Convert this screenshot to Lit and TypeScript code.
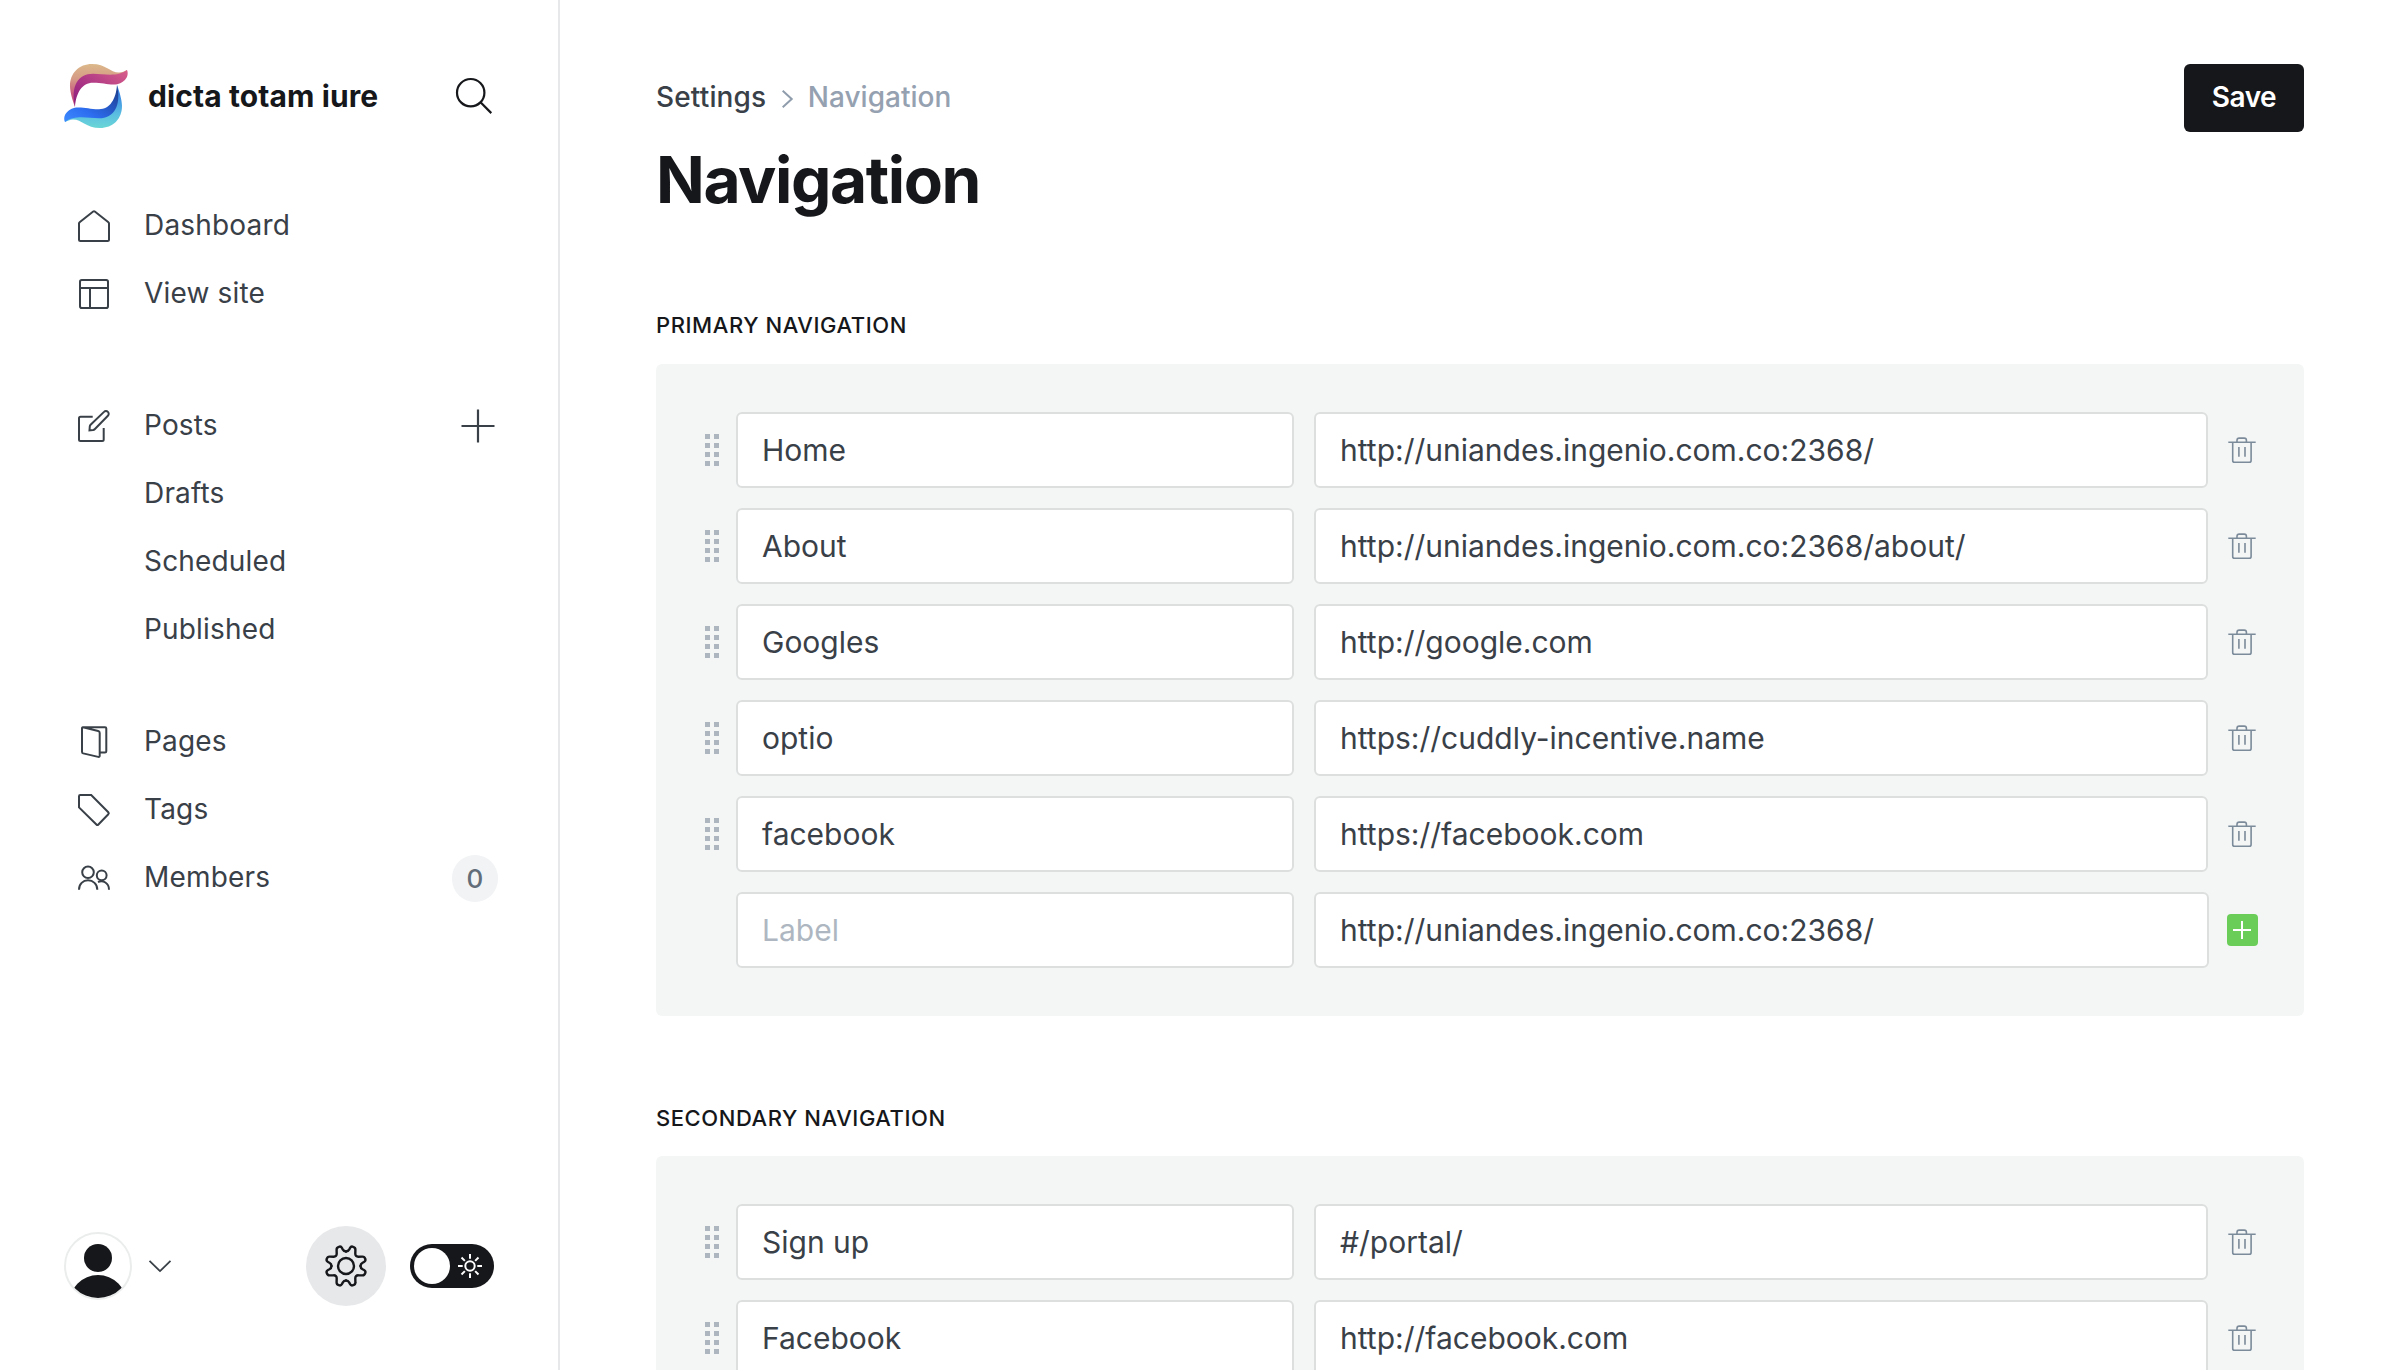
import { LitElement, html, css, svg } from "lit";
import { customElement, property } from "lit/decorators.js";

type NavRow = { label: string; url: string };

const PRIMARY: NavRow[] = [
  { label: "Home", url: "http://uniandes.ingenio.com.co:2368/" },
  { label: "About", url: "http://uniandes.ingenio.com.co:2368/about/" },
  { label: "Googles", url: "http://google.com" },
  { label: "optio", url: "https://cuddly-incentive.name" },
  { label: "facebook", url: "https://facebook.com" },
];

const SECONDARY: NavRow[] = [
  { label: "Sign up", url: "#/portal/" },
  { label: "Facebook", url: "http://facebook.com" },
];

/* Sidebar icons share a 32px grid and a 2px stroke. */
const ICONS: Record<string, unknown> = {
  house: svg`<path d="M1.900 12 15.200 1.500q.8-.6 1.600 0L30.100 12q.9.700.9 1.600V29.500q0 1.500-1.500 1.500H2.500Q1 31 1 29.500V13.600Q1 12.700 1.900 12Z"/>`,
  layout: svg`<rect x="2" y="2" width="28" height="28" rx="1.800"/><path d="M2 10h28M12 10v20"/>`,
  pencil: svg`<path d="M14.700 6.700H2.500Q1 6.700 1 8.200V29.500Q1 31 2.500 31H24.200Q25.700 31 25.700 29.500V18"/><path d="M11.500 20.300l.3-4q.1-.9.800-1.600L26 1.900a2.700 2.700 0 0 1 3.900 3.900L16.700 19.200q-.7.700-1.600.8Z"/>`,
  pages: svg`<path d="M5 1.300 20.200 5q1.500.4 1.500 1.900V29.700q0 1.600-1.500 1.200L5.200 27.400Q4 27 4 25.700V2.300Q4 1 5 1.300ZM5 1.300H27Q28.300 1.300 28.300 2.600V25.200Q28.300 26.500 27 26.500H22"/>`,
  tag: svg`<path d="M2.300 1H13.200L30.300 18.200q1 1 0 2L20.400 30.500q-1 1-2 0L1 13.400V2.300Q1 1 2.300 1Z"/>`,
  members: svg`<circle cx="10" cy="10.300" r="5.800"/><circle cx="23.700" cy="13.300" r="4.900"/><path d="M1 27.700C1 22 5 18.300 10 18.300S19.300 22 19.300 27.700M20 20C25 17.800 31 21 31 27.700"/>`,
};

@customElement("side-item")
export class SideItem extends LitElement {
  @property() label = "";
  @property() icon = "";
  @property() trailing = "";

  static styles = css`
    :host { display: flex; align-items: center; height: 68px; color: #394047; }
    svg { width: 32px; height: 32px; overflow: visible; fill: none; stroke: currentColor; stroke-width: 2; }
    .slot { display: flex; width: 66px; flex: none; }
    .text { flex: 1; font-size: 28px; line-height: 32px; padding-bottom: 2px; letter-spacing: 0.17px; }
    .plus { margin-right: 3px; width: 34px; height: 34px; stroke-width: 2.200; }
    .badge { box-sizing: border-box; width: 46px; height: 47px; border-radius: 24px; background: #f1f3f4; color: #626d79;
      font-size: 26px; font-weight: 500; line-height: 47px; text-align: center; }
  `;

  render() {
    return html`
      <span class="slot">${this.icon ? html`<svg viewBox="0 0 32 32">${ICONS[this.icon]}</svg>` : ""}</span>
      <span class="text">${this.label}</span>
      ${this.trailing === "plus"
        ? html`<svg class="plus" viewBox="0 0 34 34"><path d="M.5 17h33M17 .5v33"/></svg>`
        : this.trailing
          ? html`<span class="badge">${this.trailing}</span>`
          : ""}
    `;
  }
}

@customElement("nav-panel")
export class NavPanel extends LitElement {
  @property({ attribute: false }) rows: NavRow[] = [];
  @property() draft = "";

  static styles = css`
    :host { display: flex; flex-direction: column; gap: 20px; box-sizing: border-box; padding: 48px 46px 48px 48px;
      background: #f4f6f6; border-radius: 6px; }
    .row { display: grid; grid-template-columns: 32px 558px 914px 1fr; align-items: center; height: 76px; }
    .row.new { grid-template-columns: 32px 558px 915px 1fr; }
    .field { box-sizing: border-box; height: 76px; border: 2px solid #dddfdf; border-radius: 6px; background: #fff;
      padding: 0 24px; font-size: 30px; line-height: 72px; color: #394047; white-space: nowrap; overflow: hidden; }
    .url { margin-left: 20px; }
    .placeholder { color: #aeb7c1; }
    .grip { width: 14px; height: 32px; margin-left: 1px; fill: #adb5bf; }
    .trash { width: 28px; height: 28px; margin-left: 20px; overflow: visible; fill: none; stroke: #7c8b9a; stroke-width: 1.600; }
    .add { display: flex; width: 31px; height: 32px; margin-left: 18px; border-radius: 4px; background: #69cd58; }
    .add svg { width: 31px; height: 32px; stroke: #fff; stroke-width: 2; }
  `;

  render() {
    return html`
      ${this.rows.map(
        (r) => html`<div class="row">
          <svg class="grip" viewBox="0 0 14 32">
            ${[0, 9, 18, 27].map((y) => svg`<rect x="0" y=${y} width="5" height="5"/><rect x="9" y=${y} width="5" height="5"/>`)}
          </svg>
          <div class="field">${r.label}</div>
          <div class="field url">${r.url}</div>
          <svg class="trash" viewBox="0 0 28 28">
            <path d="M.3 6.300H27.700M4.700 6.300V24.500Q4.700 26.300 6.500 26.300H21.300Q23.100 26.300 23.100 24.500V6.300M9 6.300V4.300Q9 2.100 11.200 2.100H16.200Q18.400 2.100 18.400 4.300V6.300M10.900 11V20.700M17 11V20.700"/>
          </svg>
        </div>`
      )}
      ${this.draft
        ? html`<div class="row new">
            <span></span>
            <div class="field placeholder">Label</div>
            <div class="field url">${this.draft}</div>
            <span class="add"><svg viewBox="0 0 31 32"><path d="M6 16H24M15 7V25"/></svg></span>
          </div>`
        : ""}
    `;
  }
}

/* One quarter of the gear outline, repeated at 90 degree steps. */
const GEAR_QUARTER =
  "M0-14.500C-1.600-14.500-2.600-15.300-3.300-16.600L-4-18C-4.700-19.400-5.900-19.700-7.200-19.200C-8.900-18.700-9.500-17.600-9.400-16.200L-9.300-12.400C-9.200-10.400-10.400-9.200-12.400-9.300L-16.200-9.400C-17.600-9.500-18.700-8.900-19.200-7.200C-19.700-5.900-19.400-4.700-18-4L-16.600-3.300C-15.300-2.600-14.500-1.600-14.500 0";

@customElement("app-root")
export class AppRoot extends LitElement {
  static styles = css`
    :host { display: flex; width: 2400px; height: 1370px; overflow: hidden; background: #fff; color: #15171a;
      font-family: Inter, "Liberation Sans", sans-serif; }
    svg { overflow: visible; fill: none; flex: none; }
    .side { box-sizing: border-box; width: 560px; flex: none; display: flex; flex-direction: column;
      border-right: 2px solid #e6e8ea; padding: 64px 60px 64px 64px; }
    .brand { display: flex; align-items: center; height: 64px; }
    .logo { width: 64px; height: 64px; }
    .name { flex: 1; margin-left: 20px; font-size: 30px; font-weight: 700; line-height: 36px; padding-bottom: 1px;
      letter-spacing: 0.1px; }
    .search { width: 38px; height: 38px; stroke: #15171a; stroke-width: 2.200; margin-right: 6px; }
    .menu { display: flex; flex-direction: column; margin: 64px 0 0 14px; flex: 1; }
    .quick { margin-bottom: 64px; }
    .posts { margin-bottom: 44px; }
    .foot { display: flex; align-items: center; height: 80px; }
    .avatar { width: 68px; height: 68px; }
    .chev { width: 22px; height: 12px; margin-left: 17px; stroke: #394047; stroke-width: 1.800; }
    .gear { display: flex; width: 80px; height: 80px; border-radius: 50%; background: #e7e8ea; margin-left: auto; }
    .gear svg { width: 80px; height: 80px; stroke: #15171a; stroke-width: 2.400; stroke-linecap: round; }
    .toggle { box-sizing: border-box; display: flex; align-items: center; width: 84px; height: 44px; padding: 4px;
      border-radius: 22px; background: #15171a; margin: 0 4px 0 24px; }
    .knob { width: 36px; height: 36px; border-radius: 50%; background: #fff; }
    .sun { width: 24px; height: 24px; margin-left: 8px; stroke: #fff; stroke-width: 2; }
    .main { flex: 1; min-width: 0; padding: 64px 96px 0 96px; }
    .head { display: flex; justify-content: space-between; align-items: flex-start; height: 248px; }
    .crumbs { display: flex; align-items: center; height: 34px; margin-top: 16px; font-size: 28px; font-weight: 500;
      line-height: 34px; color: #394047; letter-spacing: 0.15px; }
    .crumbs svg { width: 11px; height: 18px; margin: 4px 14.500px 0 16px; stroke: #8f9cab; stroke-width: 2; }
    .current { color: #95a1b0; letter-spacing: 0; }
    h1 { margin: 28px 0 0; font-size: 64px; line-height: 76px; font-weight: 700; letter-spacing: -1.400px; }
    .save { box-sizing: border-box; width: 120px; height: 68px; border-radius: 6px; background: #15171a; color: #fff;
      font-size: 28px; font-weight: 600; line-height: 66px; text-align: center; letter-spacing: -0.500px; }
    h2 { margin: 0 0 26px; font-size: 22px; line-height: 26px; font-weight: 500; letter-spacing: 0.57px; }
    nav-panel + h2 { margin: 89px 0 25px; }
  `;

  render() {
    return html`
      <aside class="side">
        <div class="brand">
          <svg class="logo" viewBox="0 0 64 64">
            <defs>
              <linearGradient id="warm" x1="0" y1="0" x2="0" y2="1"><stop offset="0" stop-color="#dcb98a"/><stop offset=".35" stop-color="#d59a86"/><stop offset=".7" stop-color="#c8587f"/></linearGradient>
              <linearGradient id="plum" x1="0" y1="1" x2="1" y2="0"><stop offset="0" stop-color="#8a1d7c"/><stop offset=".4" stop-color="#a93385"/><stop offset="1" stop-color="#d9608a"/></linearGradient>
              <linearGradient id="aqua" x1="0" y1="0" x2="0" y2="1"><stop offset="0" stop-color="#6ad6d6"/><stop offset=".3" stop-color="#5cc0e0"/><stop offset=".8" stop-color="#3a86e4"/></linearGradient>
              <linearGradient id="navy" x1="0" y1="1" x2="1" y2="0"><stop offset="0" stop-color="#3d8bff"/><stop offset=".35" stop-color="#2d6df0"/><stop offset="1" stop-color="#1b3a86"/></linearGradient>
            </defs>
            <path fill="url(#warm)" d="M11 43C8 35 6 27 6 22C6 9 15 0 28 0C42 0 46 8.500 55 8.500C58 8.500 61 7 63 6C63 10 60 11.500 56 11.500L29 14C16 15 10 27 11 43Z"/>
            <path fill="url(#plum)" d="M11 43C6.500 22 14 9.700 29 9.700C40 9.700 53 13.500 63 6C66 13 59 20.500 50 20.500C42 20.500 38 18.800 29 18.800C18 18.800 12 29 11 43Z"/>
            <g transform="rotate(180 32 32)">
              <path fill="url(#aqua)" d="M11 43C8 35 6 27 6 22C6 9 15 0 28 0C42 0 46 8.500 55 8.500C58 8.500 61 7 63 6C63 10 60 11.500 56 11.500L29 14C16 15 10 27 11 43Z"/>
            </g>
            <path fill="url(#navy)" d="M53 21C57.500 42 50 54.300 35 54.300C24 54.300 11 50.500 1 58C-2 51 5 43.500 14 43.500C22 43.500 26 45.200 35 45.200C46 45.200 52 35 53 21Z"/>
          </svg>
          <span class="name">dicta totam iure</span>
          <svg class="search" viewBox="0 0 38 38"><circle cx="16.700" cy="15.700" r="13.700"/><path d="M26.500 25.300 37.300 36.100"/></svg>
        </div>
        <nav class="menu">
          <div class="quick">
            <side-item icon="house" label="Dashboard"></side-item>
            <side-item icon="layout" label="View site"></side-item>
          </div>
          <div class="posts">
            <side-item icon="pencil" label="Posts" trailing="plus"></side-item>
            <side-item label="Drafts"></side-item>
            <side-item label="Scheduled"></side-item>
            <side-item label="Published"></side-item>
          </div>
          <div>
            <side-item icon="pages" label="Pages"></side-item>
            <side-item icon="tag" label="Tags"></side-item>
            <side-item icon="members" label="Members" trailing="0"></side-item>
          </div>
        </nav>
        <div class="foot">
          <svg class="avatar" viewBox="0 0 68 68">
            <clipPath id="face"><circle cx="34" cy="34" r="32"/></clipPath>
            <circle cx="34" cy="34" r="33" fill="#fff" stroke="#ebeded" stroke-width="2"/>
            <g clip-path="url(#face)" fill="#15171a"><circle cx="34" cy="26" r="14"/><circle cx="34" cy="71.800" r="28.800"/></g>
          </svg>
          <svg class="chev" viewBox="0 0 22 12"><path d="M.5 .8 11 11.100 21.500 .8"/></svg>
          <div class="gear">
            <svg viewBox="-40 -40 80 80">
              <circle r="8"/>
              ${[0, 90, 180, 270].map((a) => svg`<path transform="rotate(${a})" d=${GEAR_QUARTER}/>`)}
            </svg>
          </div>
          <div class="toggle">
            <span class="knob"></span>
            <svg class="sun" viewBox="-12 -12 24 24">
              <circle r="4.700"/>
              ${[0, 45, 90, 135, 180, 225, 270, 315].map((a) => svg`<path transform="rotate(${a})" d="M0-7.300V-12"/>`)}
            </svg>
          </div>
        </div>
      </aside>
      <main class="main">
        <header class="head">
          <div>
            <div class="crumbs">
              <span>Settings</span>
              <svg viewBox="0 0 11 18"><path d="M.7 .8 9.700 9 .7 17.200"/></svg>
              <span class="current">Navigation</span>
            </div>
            <h1>Navigation</h1>
          </div>
          <div class="save">Save</div>
        </header>
        <h2>PRIMARY NAVIGATION</h2>
        <nav-panel .rows=${PRIMARY} draft="http://uniandes.ingenio.com.co:2368/"></nav-panel>
        <h2>SECONDARY NAVIGATION</h2>
        <nav-panel .rows=${SECONDARY}></nav-panel>
      </main>
    `;
  }
}
